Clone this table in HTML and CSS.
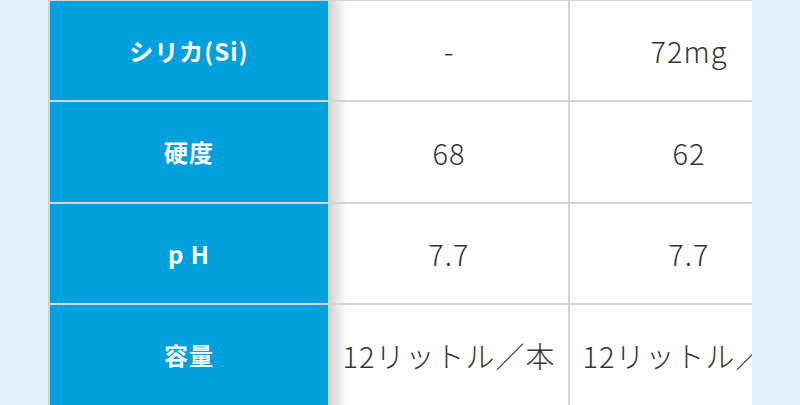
FILE: index.html
```html
<!DOCTYPE html>
<html lang="ja">
<head>
<meta charset="utf-8">
<link rel="stylesheet" href="styles.css">
</head>
<body>
<div class="page">
  <div class="scroller">
    <table class="spec">
      <tbody>
        <tr>
          <th>シリカ(Si)</th>
          <td>-</td>
          <td>72mg</td>
        </tr>
        <tr>
          <th>硬度</th>
          <td>68</td>
          <td>62</td>
        </tr>
        <tr>
          <th>p H</th>
          <td>7.7</td>
          <td>7.7</td>
        </tr>
        <tr>
          <th>容量</th>
          <td>12リットル／本</td>
          <td>12リットル／本</td>
        </tr>
      </tbody>
    </table>
  </div>
</div>
</body>
</html>
```
FILE: styles.css
```css
html, body {
  margin: 0;
  padding: 0;
  background: #dff0fb;
  overflow: hidden;
}

.page {
  padding-left: 48px;
  height: 405px;
  overflow: hidden;
}

.scroller {
  width: 704px;
  overflow: hidden;
  background: #dff0fb;
}

.spec {
  border-collapse: collapse;
  margin-top: -1.5px;
  font-family: "Noto Sans CJK JP", "Noto Sans", sans-serif;
  table-layout: fixed;
  width: 760px;
}

.spec th,
.spec td {
  border: 2px solid #d4d4d4;
  height: 99.5px;
  padding: 0;
  text-align: center;
  vertical-align: middle;
  box-sizing: content-box;
}

.spec th {
  width: 278px;
  background: #00a0dc;
  color: #fff;
  font-weight: 700;
  font-size: 24px;
  letter-spacing: 1px;
  position: relative;
  z-index: 1;
}

.spec th::after {
  content: "";
  position: absolute;
  top: 0;
  bottom: 0;
  left: 100%;
  margin-left: 2px;
  width: 18px;
  background: linear-gradient(to right, rgba(0,0,0,0.16), rgba(0,0,0,0));
  pointer-events: none;
}

.spec td {
  width: 238px;
  background: #fff;
  color: #333;
  font-weight: 300;
  font-size: 29px;
  letter-spacing: 1px;
  white-space: nowrap;
  overflow: hidden;
}
```
